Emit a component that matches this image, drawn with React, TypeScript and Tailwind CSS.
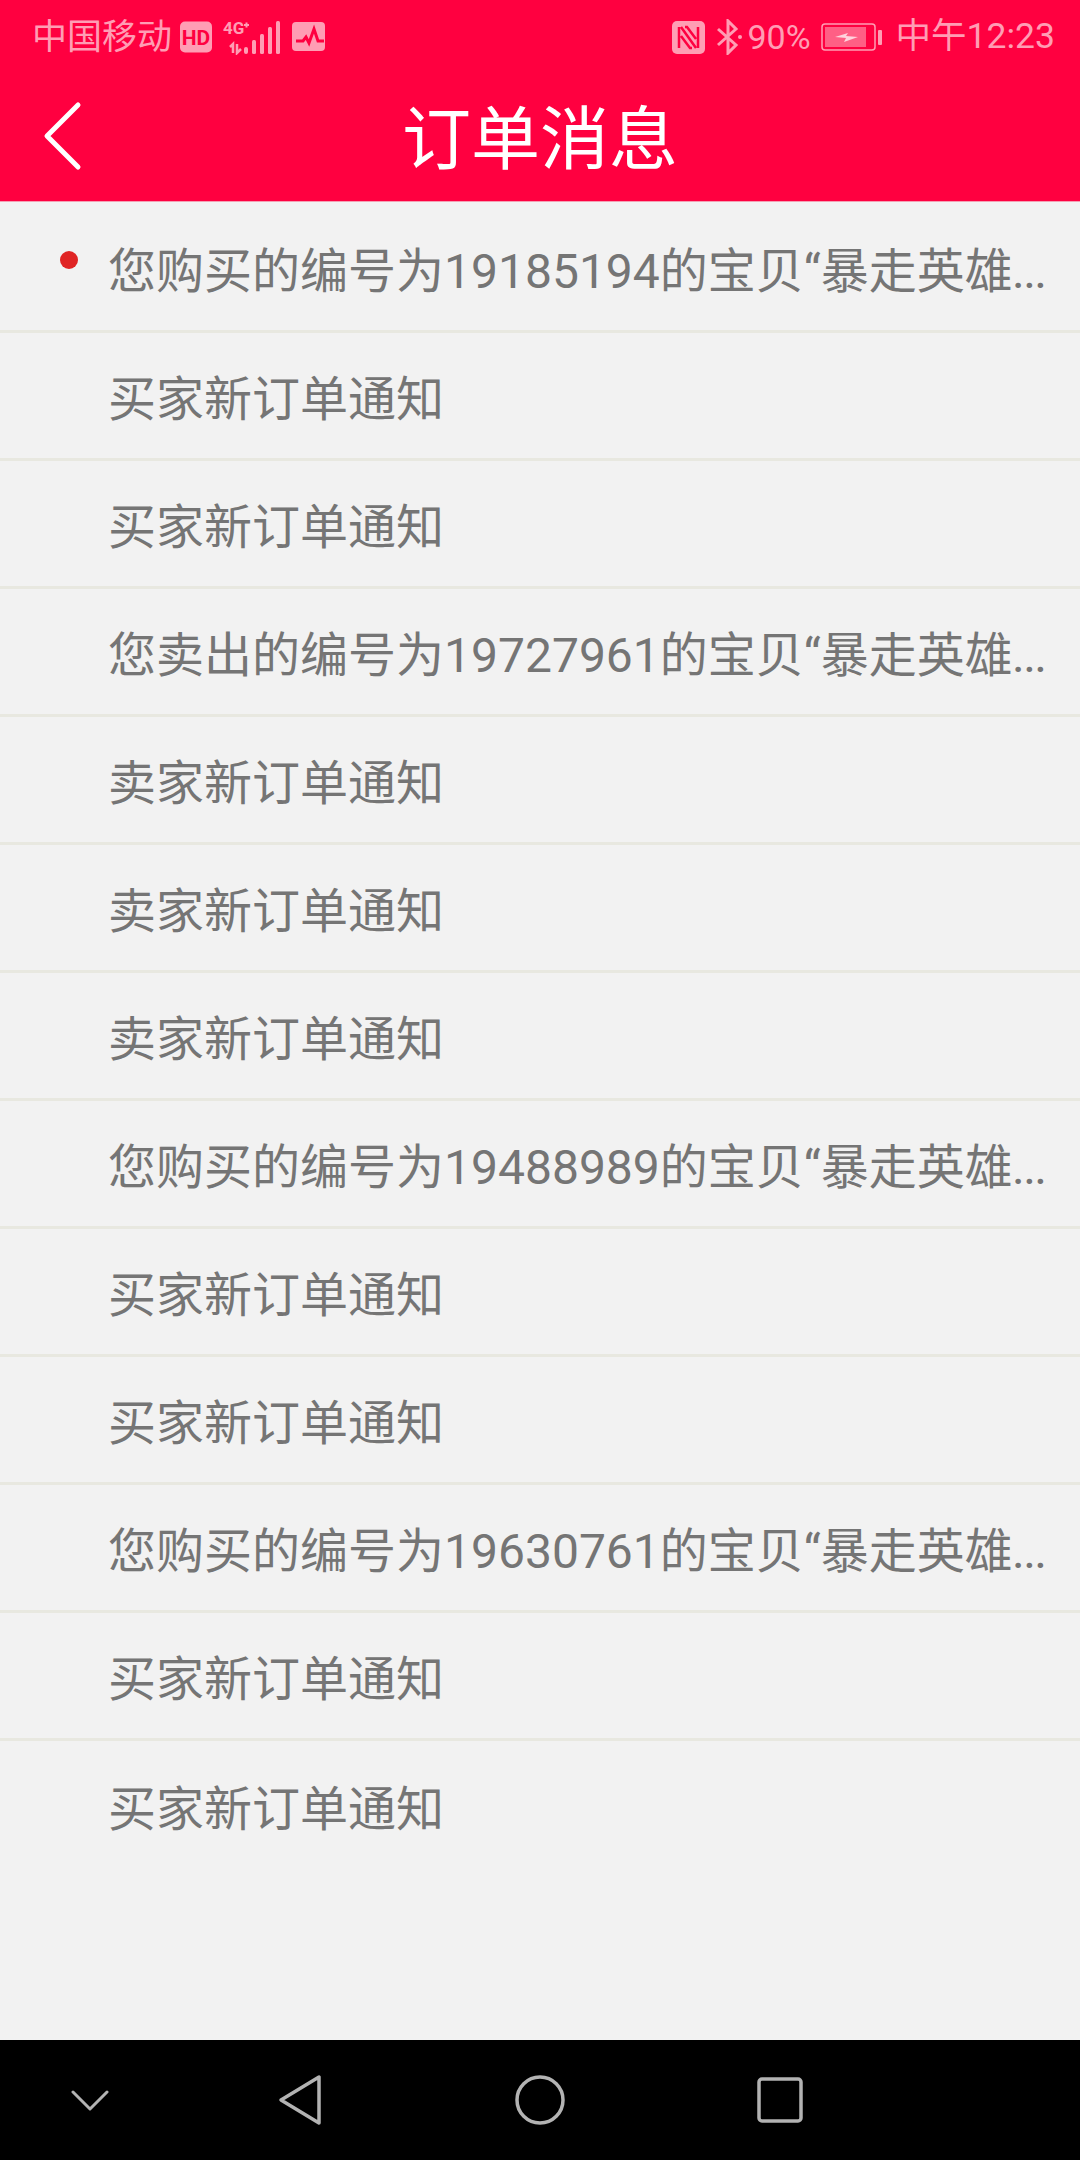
const rows = [
  { text: "您购买的编号为19185194的宝贝“暴走英雄", more: true, unread: true },
  { text: "买家新订单通知" },
  { text: "买家新订单通知" },
  { text: "您卖出的编号为19727961的宝贝“暴走英雄", more: true },
  { text: "卖家新订单通知" },
  { text: "卖家新订单通知" },
  { text: "卖家新订单通知" },
  { text: "您购买的编号为19488989的宝贝“暴走英雄", more: true },
  { text: "买家新订单通知" },
  { text: "买家新订单通知" },
  { text: "您购买的编号为19630761的宝贝“暴走英雄", more: true },
  { text: "买家新订单通知" },
  { text: "买家新订单通知" },
];

const pink = "#ff9db4";
const red = "#ff0040";

function StatusLeft() {
  return (
    <div className="flex items-center">
      <span className="w-[142px] whitespace-nowrap text-[35px] leading-none text-[#ff9db4]">中国移动</span>
      <svg width="33" height="32" viewBox="0 0 33 32" className="ml-[6px]">
        <rect width="32" height="31" y="0.5" rx="5" fill={pink} />
        <text x="16" y="24" textAnchor="middle" fontSize="21" fontWeight="700" fill={red} fontFamily="Roboto">HD</text>
      </svg>
      <svg width="60" height="36" viewBox="0 0 60 36" className="ml-[8px]">
        <text x="2" y="15" fontSize="17" fontWeight="700" fill={pink} fontFamily="Roboto">4G</text>
        <path d="M23 6h5M25.5 3.5v5" stroke={pink} strokeWidth="2" fill="none" />
        <path d="M12 34V25l-3 3M16 25v9l4-4" stroke={pink} strokeWidth="2.5" fill="none" />
        <rect x="23" y="28" width="4" height="7" rx="2" fill={pink} />
        <rect x="31" y="21" width="4" height="14" rx="1.5" fill={pink} />
        <rect x="39" y="15" width="4" height="20" rx="1.5" fill={pink} />
        <rect x="47" y="8" width="4" height="27" rx="1.5" fill={pink} />
        <rect x="55" y="2" width="4" height="33" rx="1.5" fill={pink} />
      </svg>
      <svg width="34" height="30" viewBox="0 0 34 30" className="ml-[11px]">
        <rect width="33" height="29" rx="4" fill={pink} />
        <path d="M4 19h7l3-4 3 6 5-14 4 12h6" stroke={red} strokeWidth="3" fill="none" />
      </svg>
    </div>
  );
}

function StatusRight() {
  return (
    <div className="flex items-center">
      <svg width="33" height="33" viewBox="0 0 33 33">
        <rect width="33" height="33" rx="5" fill={pink} />
        <path d="M7 6v21M26 6v21M9 6l15 21M13 6l2 0 9 12M9 15l9 12h2" stroke={red} strokeWidth="2.5" fill="none" />
      </svg>
      <svg width="27" height="36" viewBox="0 0 27 36" className="ml-[10px]">
        <path d="M3 10l18 16-8 8V2l8 8L3 26" stroke={pink} strokeWidth="3" fill="none" />
        <circle cx="25" cy="18" r="2" fill={pink} />
      </svg>
      <span className="ml-[5px] text-[34px] leading-none text-[#ff9db4]">90%</span>
      <svg width="62" height="28" viewBox="0 0 62 28" className="ml-[10px]">
        <rect x="1" y="1" width="53" height="26" rx="3" stroke={pink} strokeWidth="1.5" fill="none" />
        <rect x="4" y="4" width="41" height="20" fill="#ff5f85" />
        <path d="M14 14l13-4-2 3 12 1-14 5 2-4z" fill="#ffd3dd" />
        <rect x="57" y="7" width="4" height="15" rx="1" fill={pink} />
      </svg>
      <span className="ml-[13px] text-[35.5px] leading-none text-[#ff9db4]">中午12:23</span>
    </div>
  );
}

function NavBar() {
  return (
    <div className="flex h-[120px] items-center bg-black">
      <svg width="38" height="22" viewBox="0 0 38 22" className="ml-[71px]">
        <path d="M2 3l17 17L36 3" stroke="#b3b3b3" strokeWidth="3" strokeLinecap="round" strokeLinejoin="round" fill="none" />
      </svg>
      <svg width="44" height="52" viewBox="0 0 44 52" className="ml-[169px]">
        <path d="M41 3v46L3 26z" stroke="#b3b3b3" strokeWidth="3.5" strokeLinejoin="round" fill="none" />
      </svg>
      <svg width="50" height="50" viewBox="0 0 50 50" className="ml-[193px]">
        <circle cx="25" cy="25" r="23" stroke="#b3b3b3" strokeWidth="3.5" fill="none" />
      </svg>
      <svg width="46" height="46" viewBox="0 0 46 46" className="ml-[192px]">
        <rect x="2" y="2" width="42" height="42" rx="3" stroke="#b3b3b3" strokeWidth="3.5" fill="none" />
      </svg>
    </div>
  );
}

export default function App() {
  return (
    <div className="flex h-[2160px] w-[1080px] flex-col bg-[#f2f2f2] font-['Roboto','Noto_Sans_CJK_SC',sans-serif]">
      <header className="h-[202px] border-b border-[#f4a0b4] bg-[#ff0040]">
        <div className="flex h-[74px] items-center justify-between pl-[32px] pr-[25px]">
          <StatusLeft />
          <StatusRight />
        </div>
        <div className="relative flex h-[127px] items-center justify-center pt-[5px]">
          <svg width="42" height="70" viewBox="0 0 42 70" className="absolute left-[42px] top-[27px]">
            <path d="M36 4L5 35l31 31" stroke="#fff" strokeWidth="5" strokeLinecap="round" strokeLinejoin="round" fill="none" />
          </svg>
          <h1 className="text-[69px] leading-none font-normal text-white">订单消息</h1>
        </div>
      </header>
      <main className="flex-1 pt-[3px]">
        {rows.map((row, i) => (
          <div key={i} className="relative flex h-[128px] items-center border-b-[3px] border-[#e8e8e0] pl-[108px] last:border-b-0">
            {row.unread && <span className="absolute left-[60px] top-[46px] h-[18px] w-[18px] rounded-full bg-[#e02424]" />}
            <span className="whitespace-nowrap pt-[9px] text-[48px] leading-none text-[#757575]">
              {row.text}
              {row.more && <span className="text-[40px] font-medium">...</span>}
            </span>
          </div>
        ))}
      </main>
      <NavBar />
    </div>
  );
}
